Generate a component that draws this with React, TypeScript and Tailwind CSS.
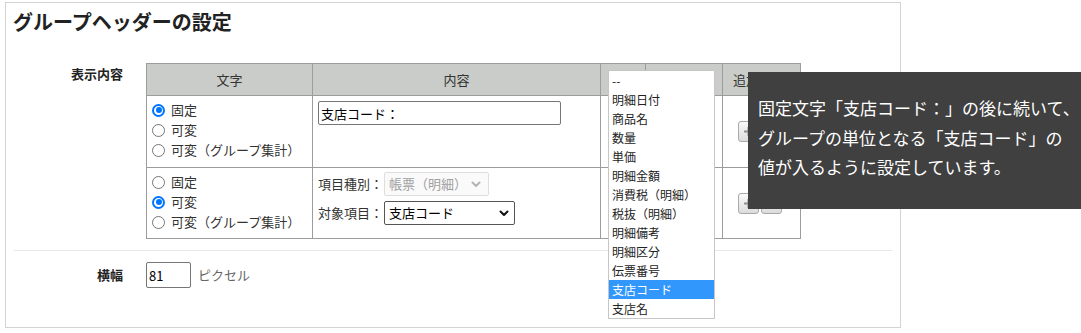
const Radio = ({ checked, label }: { checked?: boolean; label: string }) => (
  <div className="flex items-center h-[20px] gap-[6px]">
    {checked ? (
      <span className="flex items-center justify-center w-[13px] h-[13px] rounded-full border-2 border-[#0075ff] bg-white">
        <span className="w-[6px] h-[6px] rounded-full bg-[#0075ff]" />
      </span>
    ) : (
      <span className="w-[13px] h-[13px] rounded-full border border-[#767676] bg-white" />
    )}
    <span>{label}</span>
  </div>
);

const Chevron = ({ color }: { color: string }) => (
  <svg width="10" height="7" viewBox="0 0 10 7" fill="none">
    <path d="M1.5 1.5 L5 5 L8.5 1.5" stroke={color} strokeWidth="2" strokeLinecap="round" strokeLinejoin="round" />
  </svg>
);

const SmallButton = ({ minus }: { minus?: boolean }) => (
  <div className="flex items-center justify-center w-[21px] h-[21px] border border-[#a9a9a9] rounded-[3px] bg-gradient-to-b from-[#fafafa] to-[#dcdcdc]">
    <svg width="11" height="11" viewBox="0 0 11 11">
      <rect x="1" y="4.5" width="9" height="2" fill="#8c8c8c" />
      {!minus && <rect x="4.5" y="1" width="2" height="9" fill="#8c8c8c" />}
    </svg>
  </div>
);

const options = [
  "--",
  "明細日付",
  "商品名",
  "数量",
  "単価",
  "明細金額",
  "消費税（明細）",
  "税抜（明細）",
  "明細備考",
  "明細区分",
  "伝票番号",
  "支店コード",
  "支店名",
];

const cell = "border-r border-b border-[#9c9c9c]";

export default function App() {
  return (
    <div className="relative w-[1081px] h-[333px] overflow-hidden bg-white font-['Noto_Sans_CJK_JP',sans-serif] text-[13px] text-[#333]">
      {/* 設定パネル */}
      <div className="ml-[5px] mt-[2px] w-[896px] h-[326px] border border-[#d3d3d3] bg-white">
        <h1 className="pl-[7px] pt-[9px] text-[20px] leading-[20px] font-bold text-[#222]">
          グループヘッダーの設定
        </h1>

        <div className="flex mt-[31px]">
          <div className="w-[140px] shrink-0 pr-[23px] pt-[3px] text-right font-bold leading-[16px] text-[#222]">
            表示内容
          </div>
          <div className="grid grid-cols-[166px_288px_45px_77px_78px] border-l border-t border-[#9c9c9c] leading-[16px]">
            {/* ヘッダー */}
            <div className={`${cell} h-[32px] bg-[#c9ccc8] flex items-center justify-center`}>文字</div>
            <div className={`${cell} h-[32px] bg-[#c9ccc8] flex items-center justify-center`}>内容</div>
            <div className={`${cell} h-[32px] bg-[#c9ccc8]`} />
            <div className={`${cell} h-[32px] bg-[#c9ccc8]`} />
            <div className={`${cell} h-[32px] bg-[#c9ccc8] flex items-center justify-center whitespace-nowrap`}>追加/削除</div>

            {/* 1行目 */}
            <div className={`${cell} h-[72px] pl-[5px] pt-[4px]`}>
              <Radio checked label="固定" />
              <Radio label="可変" />
              <Radio label="可変（グループ集計）" />
            </div>
            <div className={`${cell} h-[72px] pl-[5px] pt-[5px]`}>
              <input
                readOnly
                value="支店コード："
                className="w-[243px] h-[24px] border border-[#767676] rounded-[2px] px-[2px] text-[13px] text-black outline-none"
              />
            </div>
            <div className={`${cell} h-[72px]`} />
            <div className={`${cell} h-[72px]`} />
            <div className={`${cell} h-[72px] flex items-center pl-[15px] gap-[2px]`}>
              <SmallButton />
              <SmallButton minus />
            </div>

            {/* 2行目 */}
            <div className={`${cell} h-[71px] pl-[5px] pt-[4px]`}>
              <Radio label="固定" />
              <Radio checked label="可変" />
              <Radio label="可変（グループ集計）" />
            </div>
            <div className={`${cell} h-[71px] pl-[5px] pt-[4px] flex flex-col gap-[5px]`}>
              <div className="flex items-center">
                <span className="w-[66px] shrink-0">項目種別：</span>
                <div className="flex items-center justify-between w-[105px] h-[24px] border border-[#dedede] rounded-[2px] bg-[#fafafa] pl-[4px] pr-[7px] text-[#a0a0a0]">
                  <span>帳票（明細）</span>
                  <Chevron color="#b5b5b5" />
                </div>
              </div>
              <div className="flex items-center">
                <span className="w-[66px] shrink-0">対象項目：</span>
                <div className="flex items-center justify-between w-[131px] h-[24px] border border-[#555] rounded-[2px] bg-white pl-[4px] pr-[5px] text-black">
                  <span>支店コード</span>
                  <Chevron color="#111" />
                </div>
              </div>
            </div>
            <div className={`${cell} h-[71px]`} />
            <div className={`${cell} h-[71px]`} />
            <div className={`${cell} h-[71px] flex items-center pl-[15px] gap-[2px]`}>
              <SmallButton />
              <SmallButton minus />
            </div>
          </div>
        </div>

        <div className="mx-[8px] mt-[11px] h-px bg-[#e8e8e8]" />

        <div className="flex items-center mt-[11px]">
          <div className="w-[140px] shrink-0 pr-[23px] text-right font-bold text-[#222]">横幅</div>
          <input
            readOnly
            value="81"
            className="w-[45px] h-[26px] border border-[#767676] rounded-[2px] px-[2px] text-[13px] text-black outline-none"
          />
          <span className="ml-[7px] text-[#666]">ピクセル</span>
        </div>
      </div>

      {/* 開いたセレクトの一覧 */}
      <div className="absolute left-[608px] top-[70px] w-[107px] border border-[#c6c6c6] bg-white text-[12px] text-[#222]">
        {options.map((o) => (
          <div
            key={o}
            className={`h-[19px] leading-[19px] pl-[3px] whitespace-nowrap ${
              o === "支店コード" ? "bg-[#3297fd] text-white" : ""
            }`}
          >
            {o}
          </div>
        ))}
      </div>

      {/* 説明の吹き出し */}
      <div className="absolute left-[748px] top-[72px] right-0 h-[137px] bg-[#404040] pl-[10px] pt-[21px] text-[17px] leading-[29.5px] text-white whitespace-nowrap">
        固定文字「支店コード：」の後に続いて、
        <br />
        グループの単位となる「支店コード」の
        <br />
        値が入るように設定しています。
      </div>
    </div>
  );
}
